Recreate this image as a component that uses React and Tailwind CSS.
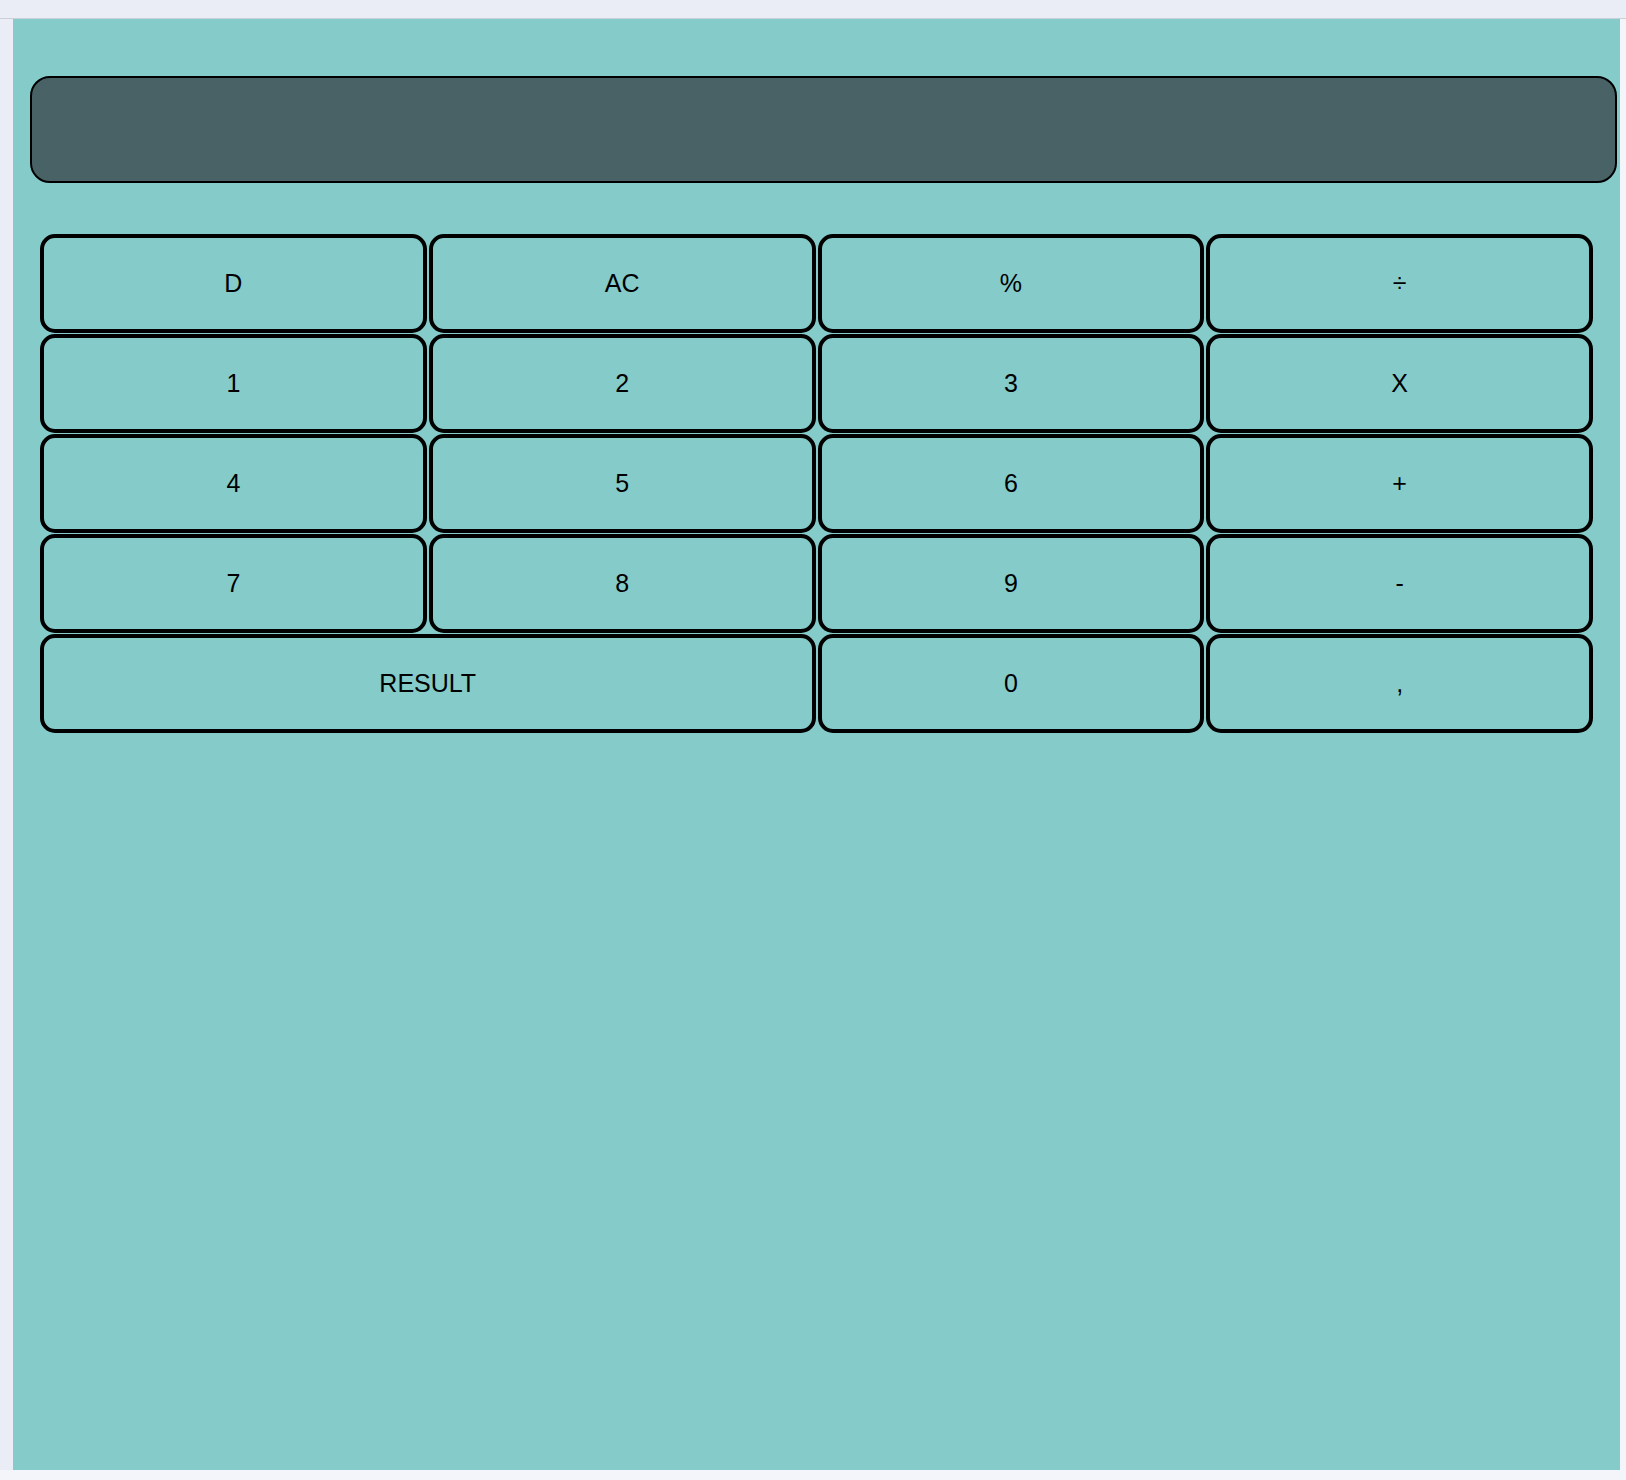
export default function App() {
  const keys = [
    { label: 'D' }, { label: 'AC' }, { label: '%' }, { label: '÷' },
    { label: '1' }, { label: '2' }, { label: '3' }, { label: 'X' },
    { label: '4' }, { label: '5' }, { label: '6' }, { label: '+' },
    { label: '7' }, { label: '8' }, { label: '9' }, { label: '-' },
    { label: 'RESULT', wide: true }, { label: '0' }, { label: ',' },
  ];

  return (
    <div className="min-h-screen bg-[#f4f5fa]" style={{ fontFamily: '"Liberation Sans", Arial, sans-serif' }}>
      <div className="h-[19px] bg-[#eaedf5] border-b border-[#cbd0d8]" />
      <div className="flex">
        <div className="w-[13px] bg-[#eaedf5]" />
        <div className="w-[1607px] h-[1451px] bg-[#84cbca] pt-[57px]">
          <div className="ml-[17px] w-[1587px] h-[107px] rounded-[20px] border-2 border-black bg-[#486266]" />
          <div className="mx-[27px] mt-[51px] grid grid-cols-4 gap-x-[2px] gap-y-[1px]">
            {keys.map((k) => (
              <button
                key={k.label}
                className={`${k.wide ? 'col-span-2' : ''} h-[99px] rounded-[15px] border-4 border-black bg-[#84cbca] text-black text-[25px] flex items-center justify-center`}
              >
                {k.label}
              </button>
            ))}
          </div>
        </div>
      </div>
    </div>
  );
}
